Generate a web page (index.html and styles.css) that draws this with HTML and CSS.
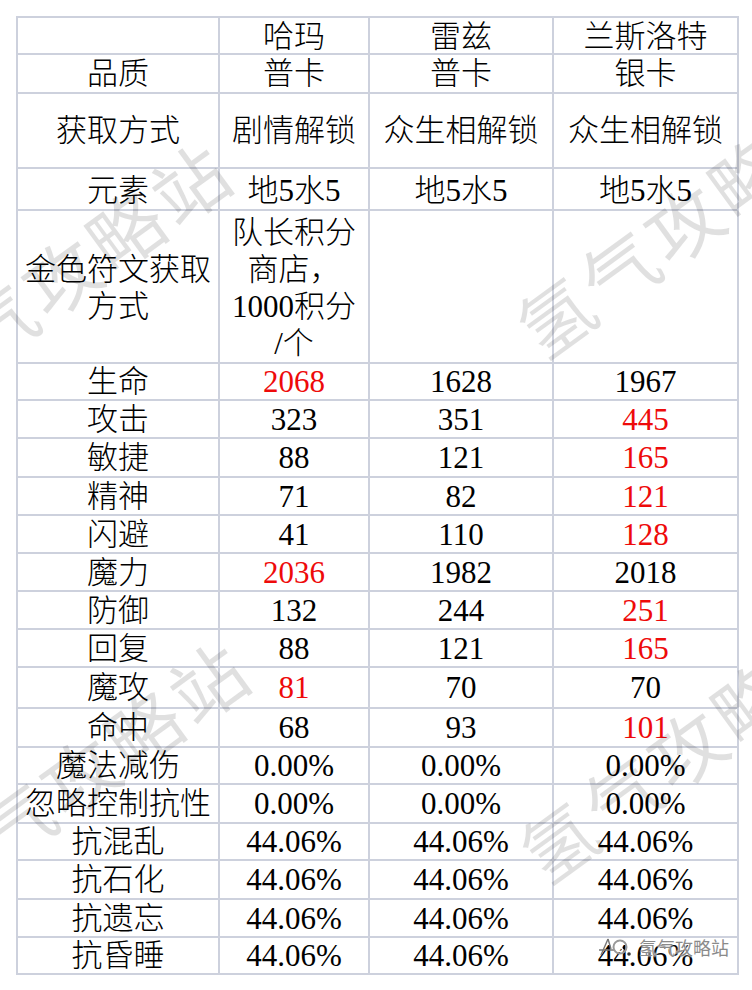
FILE: index.html
```html
<!DOCTYPE html>
<html lang="zh-CN">
<head>
<meta charset="utf-8">
<title>角色属性对比</title>
<link rel="stylesheet" href="styles.css">
</head>
<body>
<div class="page">
  <table class="stats">
    <colgroup>
      <col class="c-label">
      <col class="c-a">
      <col class="c-b">
      <col class="c-c">
    </colgroup>
    <tbody>
      <tr class="r-name"><td></td><td>哈玛</td><td>雷兹</td><td>兰斯洛特</td></tr>
      <tr class="r-quality"><td>品质</td><td>普卡</td><td>普卡</td><td>银卡</td></tr>
      <tr class="r-acq"><td>获取方式</td><td>剧情解锁</td><td>众生相解锁</td><td>众生相解锁</td></tr>
      <tr class="r-elem"><td>元素</td><td>地5水5</td><td>地5水5</td><td>地5水5</td></tr>
      <tr class="r-gold"><td class="wrap">金色符文获取方式</td><td>队长积分<br>商店，<br>1000积分<br>/个</td><td></td><td></td></tr>
      <tr class="h37"><td>生命</td><td class="hi">2068</td><td>1628</td><td>1967</td></tr>
      <tr class="h38"><td>攻击</td><td>323</td><td>351</td><td class="hi">445</td></tr>
      <tr class="h39"><td>敏捷</td><td>88</td><td>121</td><td class="hi">165</td></tr>
      <tr class="h38"><td>精神</td><td>71</td><td>82</td><td class="hi">121</td></tr>
      <tr class="h38"><td>闪避</td><td>41</td><td>110</td><td class="hi">128</td></tr>
      <tr class="h38"><td>魔力</td><td class="hi">2036</td><td>1982</td><td>2018</td></tr>
      <tr class="h38"><td>防御</td><td>132</td><td>244</td><td class="hi">251</td></tr>
      <tr class="h38"><td>回复</td><td>88</td><td>121</td><td class="hi">165</td></tr>
      <tr class="h41"><td>魔攻</td><td class="hi">81</td><td>70</td><td>70</td></tr>
      <tr class="h39"><td>命中</td><td>68</td><td>93</td><td class="hi">101</td></tr>
      <tr class="h37"><td>魔法减伤</td><td>0.00%</td><td>0.00%</td><td>0.00%</td></tr>
      <tr class="h39"><td>忽略控制抗性</td><td>0.00%</td><td>0.00%</td><td>0.00%</td></tr>
      <tr class="h37"><td>抗混乱</td><td>44.06%</td><td>44.06%</td><td>44.06%</td></tr>
      <tr class="h39"><td>抗石化</td><td>44.06%</td><td>44.06%</td><td>44.06%</td></tr>
      <tr class="h38"><td>抗遗忘</td><td>44.06%</td><td>44.06%</td><td>44.06%</td></tr>
      <tr class="h37"><td>抗昏睡</td><td>44.06%</td><td>44.06%</td><td>44.06%</td></tr>
    </tbody>
  </table>

  <div class="wm wm-1">氢气攻略站</div>
  <div class="wm wm-2">氢气攻略站</div>
  <div class="wm wm-3">氢气攻略站</div>
  <div class="wm wm-4">氢气攻略站</div>

  <div class="badge">
    <svg class="badge-icon" viewBox="0 0 40 22" width="40" height="22" aria-hidden="true">
      <path d="M10 3 L3 19 M10 3 L13 13 M1 14 L16 14" fill="none" stroke="#777" stroke-width="1.4"/>
      <circle cx="22" cy="11" r="6.5" fill="none" stroke="#999" stroke-width="2"/>
      <path d="M19 8 Q22 5 25 8 Q22 11 25 14 Q22 17 19 14" fill="none" stroke="#fff" stroke-width="1.6"/>
      <circle cx="31" cy="18" r="1.8" fill="#333"/>
    </svg>
    <span class="badge-text">氢气攻略站</span>
  </div>
</div>
</body>
</html>
```

FILE: styles.css
```css
html, body {
  margin: 0;
  padding: 0;
  background: #ffffff;
}

body {
  font-family: "Liberation Serif", "Noto Sans CJK SC", serif;
  color: #000000;
}

.page {
  position: relative;
  width: 752px;
  height: 990px;
  box-sizing: border-box;
  padding: 16px 0 0 16px;
  overflow: hidden;
}

.stats {
  border-collapse: collapse;
  table-layout: fixed;
  width: 721px;
  font-size: 31px;
  line-height: 33px;
}

.c-label { width: 202px; }
.c-a { width: 150px; }
.c-b { width: 184px; }
.c-c { width: 185px; }

.stats td {
  border: 2px solid #cdd1dd;
  padding: 0;
  text-align: center;
  vertical-align: middle;
  font-weight: 300;
  white-space: nowrap;
}

.stats td.wrap {
  white-space: normal;
}

.stats td.hi {
  color: #ee0a0a;
}

.r-name { height: 37px; }
.r-name td { padding-top: 3px; line-height: 30px; }
.r-quality { height: 39px; }
.r-acq { height: 75px; }
.r-elem { height: 42px; }
.r-elem td { padding-top: 3px; }
.r-gold { height: 153px; }
.r-gold td { line-height: 37px; padding-top: 2px; }
.h37 { height: 37px; }
.h38 { height: 38px; }
.h39 { height: 39px; }
.h41 { height: 41px; }

.wm {
  position: absolute;
  width: 420px;
  height: 90px;
  line-height: 90px;
  text-align: center;
  white-space: nowrap;
  font-family: "Noto Sans CJK SC", sans-serif;
  font-size: 74px;
  letter-spacing: 5px;
  color: rgba(0, 0, 0, 0.12);
  transform: rotate(-36deg);
  pointer-events: none;
}

.wm-1 { left: -148px; top: 228px; }
.wm-2 { left: 474px; top: 175px; }
.wm-3 { left: -130px; top: 727px; }
.wm-4 { left: 477px; top: 700px; }

.badge {
  position: absolute;
  left: 598px;
  top: 936px;
  display: flex;
  align-items: center;
  gap: 1px;
}

.badge-icon {
  display: block;
}

.badge-text {
  font-family: "Noto Sans CJK SC", sans-serif;
  font-size: 18px;
  line-height: 22px;
  color: #8a8a8a;
  text-shadow: 0 0 2px #ffffff, 0 0 2px #ffffff;
}
```
